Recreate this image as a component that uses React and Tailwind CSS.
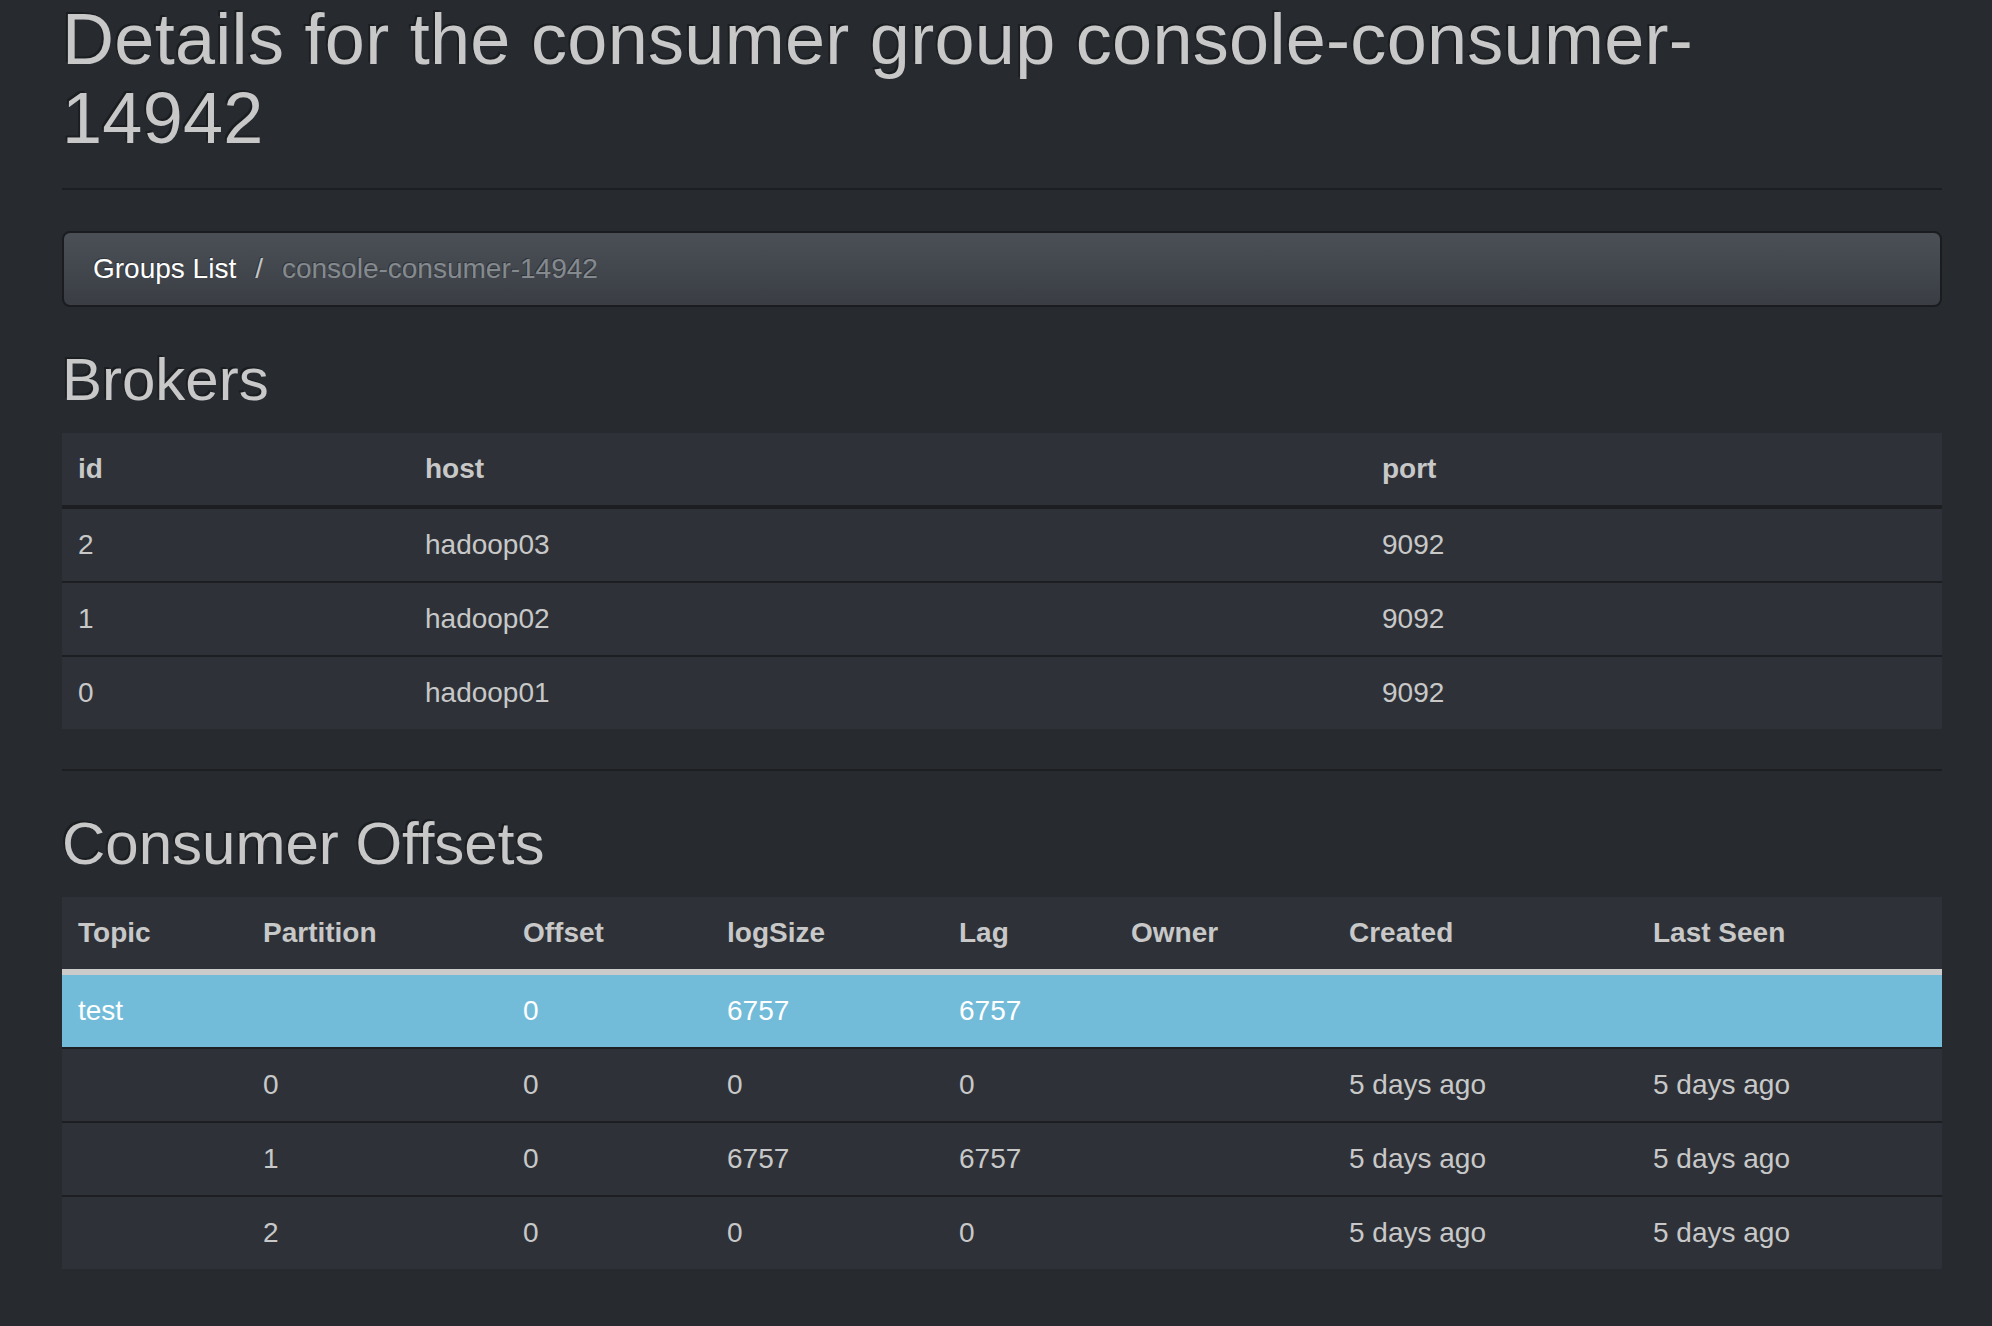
import React from "react";

const brokers = [
  { id: 2, host: "hadoop03", port: 9092 },
  { id: 1, host: "hadoop02", port: 9092 },
  { id: 0, host: "hadoop01", port: 9092 },
];

const offsets = [
  { partition: 0, offset: 0, logSize: 0, lag: 0 },
  { partition: 1, offset: 0, logSize: 6757, lag: 6757 },
  { partition: 2, offset: 0, logSize: 0, lag: 0 },
];

const th = "px-4 py-4 text-left font-bold leading-[40px] border-b-4 border-[#1c1e22]";
const th2 = "px-4 py-4 text-left font-bold leading-[40px] border-b-[6px] border-[#cbcbcb]";
const td = "px-4 py-4 leading-[40px] font-normal";
const tdRow = "px-4 py-4 leading-[40px] border-t-2 border-[#1c1e22]";

export default function App() {
  return (
    <div className="min-h-screen bg-[#272b30] text-[#c8c8c8] font-['Liberation_Sans',Arial,sans-serif] text-[28px]">
      <div className="w-[1880px] ml-[62px]">
        {/* page header */}
        <div className="pb-[30px] border-b-2 border-[#1c1e22]">
          <h1 className="text-[72px] leading-[1.1] tracking-[0.3px] [text-shadow:-2px_-2px_0_rgba(0,0,0,0.3)]">
            Details for the consumer group console-consumer-
            <br />
            14942
          </h1>
        </div>

        {/* breadcrumb */}
        <div className="mt-[41px] mb-10 rounded-lg border-2 border-[#1a1c1f] bg-gradient-to-b from-[#4b5057] to-[#3a3e44] px-[29px] py-4 leading-[40px] [text-shadow:-1px_-1px_0_rgba(0,0,0,0.3)]">
          <span className="text-white">Groups List</span>
          <span className="px-[19px] text-[#c4c4c4]">/</span>
          <span className="text-[#858a8f]">console-consumer-14942</span>
        </div>

        <h2 className="text-[60px] leading-[1.1] mb-5 [text-shadow:-2px_-2px_0_rgba(0,0,0,0.3)]">Brokers</h2>
        <table className="w-full table-fixed border-separate border-spacing-0 bg-[#2e3238]">
          <colgroup>
            <col className="w-[347px]" />
            <col className="w-[957px]" />
            <col className="w-[576px]" />
          </colgroup>
          <thead>
            <tr>
              <th className={th}>id</th>
              <th className={th}>host</th>
              <th className={th}>port</th>
            </tr>
          </thead>
          <tbody>
            {brokers.map((b, i) => (
              <tr key={b.id}>
                <td className={i === 0 ? td : tdRow}>{b.id}</td>
                <td className={i === 0 ? td : tdRow}>{b.host}</td>
                <td className={i === 0 ? td : tdRow}>{b.port}</td>
              </tr>
            ))}
          </tbody>
        </table>

        <hr className="mt-10 border-0 border-t-2 border-[#1c1e22]" />

        <h2 className="mt-10 text-[60px] leading-[1.1] mb-5 [text-shadow:-2px_-2px_0_rgba(0,0,0,0.3)]">Consumer Offsets</h2>
        <table className="w-full table-fixed border-separate border-spacing-0 bg-[#2e3238] mb-10">
          <colgroup>
            <col className="w-[185px]" />
            <col className="w-[260px]" />
            <col className="w-[204px]" />
            <col className="w-[232px]" />
            <col className="w-[172px]" />
            <col className="w-[218px]" />
            <col className="w-[304px]" />
            <col className="w-[305px]" />
          </colgroup>
          <thead>
            <tr>
              <th className={th2}>Topic</th>
              <th className={th2}>Partition</th>
              <th className={th2}>Offset</th>
              <th className={th2}>logSize</th>
              <th className={th2}>Lag</th>
              <th className={th2}>Owner</th>
              <th className={th2}>Created</th>
              <th className={th2}>Last Seen</th>
            </tr>
          </thead>
          <tbody>
            <tr className="bg-[#72bcd9] text-white">
              <td className={td}>test</td>
              <td className={td}></td>
              <td className={td}>0</td>
              <td className={td}>6757</td>
              <td className={td}>6757</td>
              <td className={td}></td>
              <td className={td}></td>
              <td className={td}></td>
            </tr>
            {offsets.map((o) => (
              <tr key={o.partition}>
                <td className={tdRow}></td>
                <td className={tdRow}>{o.partition}</td>
                <td className={tdRow}>{o.offset}</td>
                <td className={tdRow}>{o.logSize}</td>
                <td className={tdRow}>{o.lag}</td>
                <td className={tdRow}></td>
                <td className={tdRow}>5 days ago</td>
                <td className={tdRow}>5 days ago</td>
              </tr>
            ))}
          </tbody>
        </table>
      </div>
    </div>
  );
}
